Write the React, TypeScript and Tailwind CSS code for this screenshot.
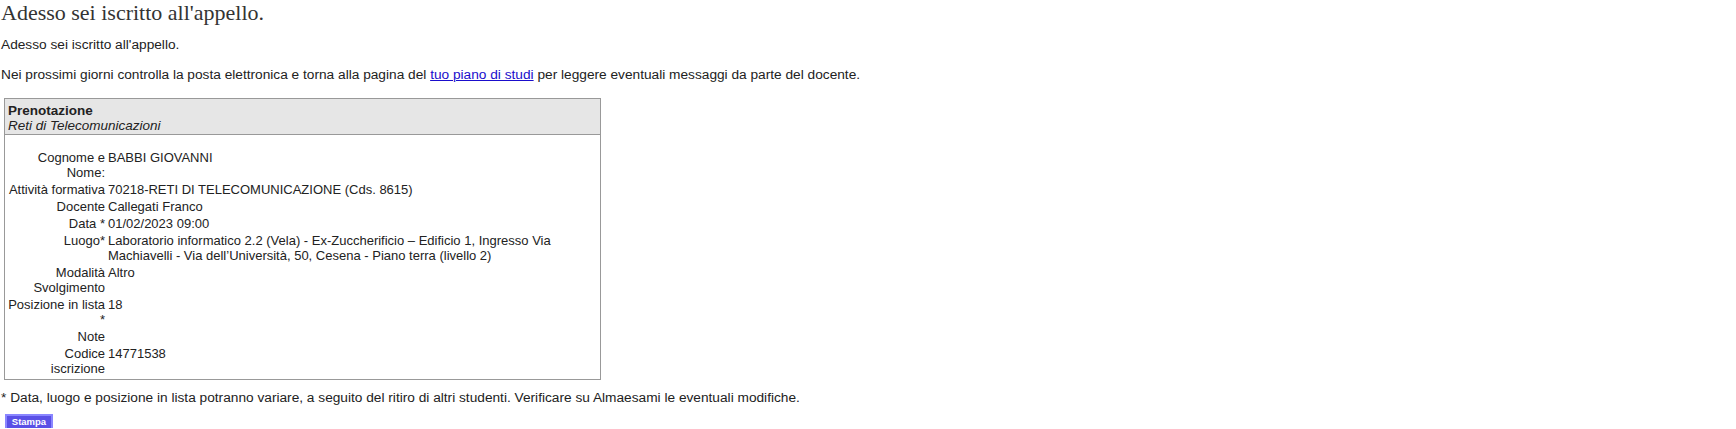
import React from 'react';

const rows: { label: string; value?: string }[] = [
  { label: 'Cognome e Nome:', value: 'BABBI GIOVANNI' },
  { label: 'Attività formativa', value: '70218-RETI DI TELECOMUNICAZIONE (Cds. 8615)' },
  { label: 'Docente', value: 'Callegati Franco' },
  { label: 'Data *', value: '01/02/2023 09:00' },
  {
    label: 'Luogo*',
    value:
      'Laboratorio informatico 2.2 (Vela) - Ex-Zuccherificio – Edificio 1, Ingresso Via Machiavelli - Via dell’Università, 50, Cesena - Piano terra (livello 2)',
  },
  { label: 'Modalità Svolgimento', value: 'Altro' },
  { label: 'Posizione in lista *', value: '18' },
  { label: 'Note' },
  { label: 'Codice iscrizione', value: '14771538' },
];

const App = () => {
  return (
    <div className="min-h-screen bg-white pl-[1px] text-[#222] font-['Liberation_Sans',Arial,sans-serif]">
      <h1 className="pt-[1px] text-[22px] leading-[24px] text-[#333] font-['Liberation_Serif',Georgia,serif]">
        Adesso sei iscritto all'appello.
      </h1>

      <p className="mt-[12px] text-[13.7px] leading-[16px]">Adesso sei iscritto all'appello.</p>
      <p className="mt-[14px] text-[13.7px] leading-[16px]">
        Nei prossimi giorni controlla la posta elettronica e torna alla pagina del{' '}
        <a href="#" className="text-[#1a0dcc] underline">
          tuo piano di studi
        </a>{' '}
        per leggere eventuali messaggi da parte del docente.
      </p>

      <div className="mt-[15px] ml-[3px] w-[597px] border border-[#999] text-[13px] leading-[15px]">
        <div className="bg-[#e6e6e6] border-b border-[#999] px-[3px] pt-[4px] pb-[1px] text-[13.5px]">
          <div className="font-bold">Prenotazione</div>
          <div className="italic">Reti di Telecomunicazioni</div>
        </div>
        <div className="grid grid-cols-[97px_1fr] gap-x-[3px] gap-y-[2px] pl-[3px] pr-[4px] pt-[15px] pb-[3px]">
          {rows.map((r) => (
            <React.Fragment key={r.label}>
              <div className="text-right">{r.label}</div>
              <div>{r.value}</div>
            </React.Fragment>
          ))}
        </div>
      </div>

      <p className="mt-[10px] text-[13.7px] leading-[16px]">
        * Data, luogo e posizione in lista potranno variare, a seguito del ritiro di altri studenti. Verificare su
        Almaesami le eventuali modifiche.
      </p>

      <div className="mt-[2px] border-b-2 border-[#e3e3e3] pl-[4px]">
        <button className="h-[14px] w-[48px] bg-[#5a50e6] border-2 border-b-0 border-[#8a86ff] text-white font-bold text-[9.5px] leading-[10px]">
          Stampa
        </button>
      </div>
    </div>
  );
};

export default App;
